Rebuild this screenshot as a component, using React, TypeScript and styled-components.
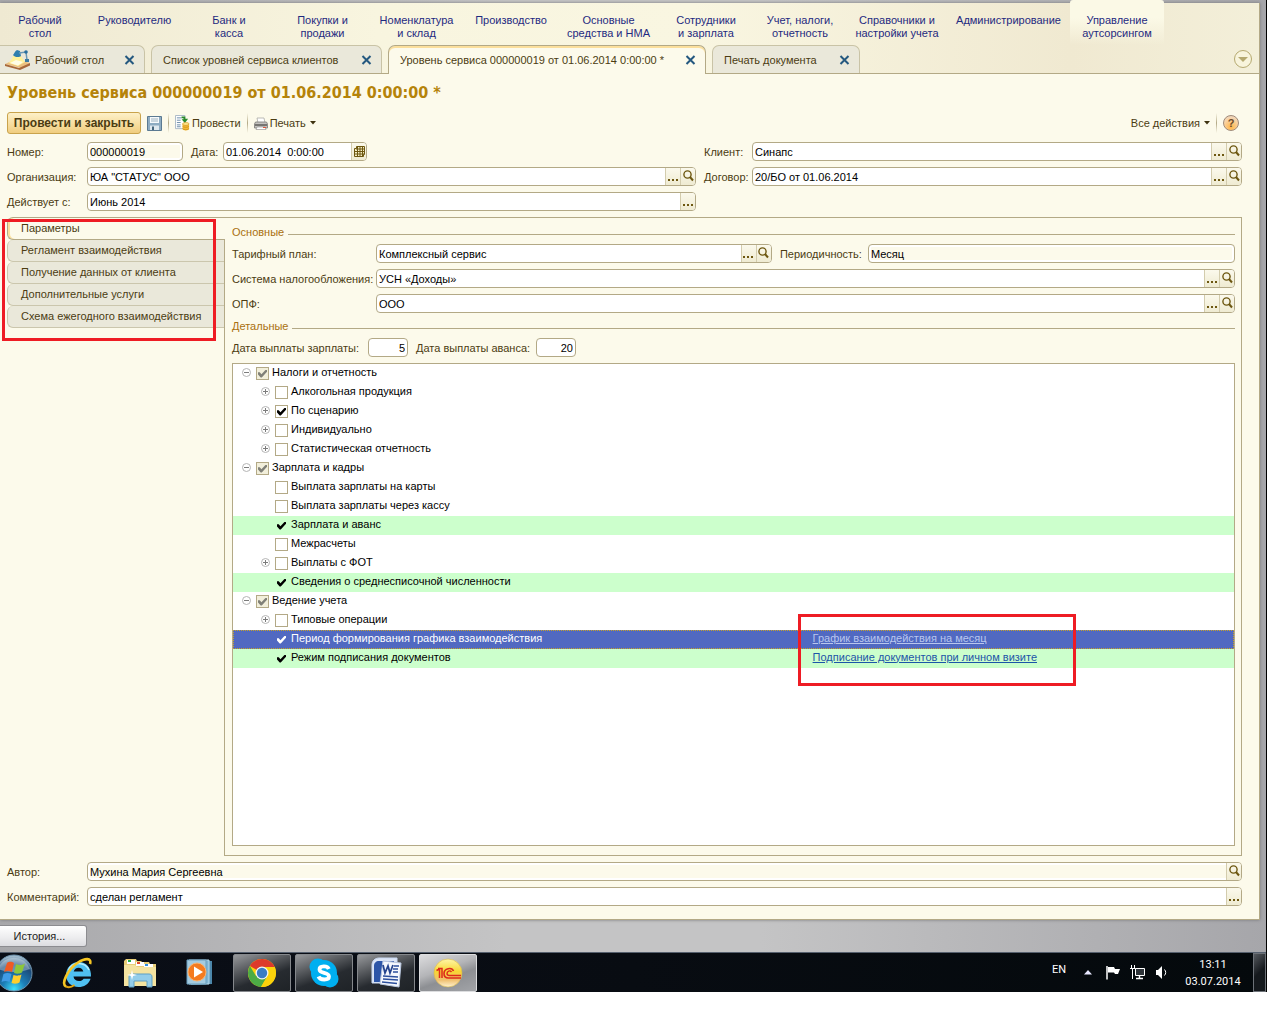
import React from "react";
import styled, { createGlobalStyle, css } from "styled-components";

const line = "#b3a986";
const cream = "#fcfaeb";
const ink = "#4b3c12";

const Global = createGlobalStyle`
  * { box-sizing: border-box; }
  body {
    margin: 0;
    background: #fff;
    font-family: "Liberation Sans", Arial, sans-serif;
    font-size: 11px;
    line-height: 14px;
    color: ${ink};
  }
  button, input { font: inherit; color: inherit; margin: 0; padding: 0; }
`;

const Desktop = styled.div`
  margin-right: 13px;
  border-right: 1px solid #000;
  background: linear-gradient(90deg, #a8a8ab, #c4c4c5 40%, #c4c4c5 60%, #a6a6aa);
  overflow: hidden;
`;

const AppWindow = styled.main`
  margin: 3px 6px 0 0;
  border-right: 1px solid ${line};
  border-bottom: 1px solid ${line};
  background: ${cream};
  box-shadow: 0 0 3px #77777a;
`;

const Header = styled.header`
  background: linear-gradient(90deg, #efe9d2, #f8f5df 30%, #f9f6e1 55%, #f0e9d1 85%, #f3efd9);
`;

const Sections = styled.nav`
  display: flex;
  height: 42px;
  margin-left: -7px;
`;

const Section = styled.a<{ $w: number; $active?: boolean }>`
  width: ${(p) => p.$w}px;
  padding-top: 11px;
  line-height: 13px;
  text-align: center;
  white-space: pre-line;
  text-decoration: none;
  color: #1f2a80;
  ${(p) =>
    p.$active &&
    css`
      margin-top: -3px;
      padding-top: 14px;
      border-radius: 3px 3px 0 0;
      background: linear-gradient(#fbf9e6 40%, rgba(251, 249, 230, 0));
    `}
`;

const TabBar = styled.div`
  display: flex;
  gap: 6px;
  height: 29px;
  border-bottom: 1px solid ${line};
`;

const Tab = styled.div<{ $w: number; $active?: boolean; $first?: boolean }>`
  display: flex;
  align-items: center;
  width: ${(p) => p.$w}px;
  height: 28px;
  padding: 0 9px 0 ${(p) => (p.$first ? 5 : 11)}px;
  border: 1px solid #c9c3a6;
  border-bottom: 0;
  border-left-width: ${(p) => (p.$first ? 0 : 1)}px;
  border-radius: ${(p) => (p.$first ? 0 : 7)}px 7px 0 0;
  background: #eae8da;
  ${(p) =>
    p.$active &&
    css`
      height: 29px;
      border-color: ${line};
      background: ${cream};
      box-shadow: inset 0 2px #fbdf9c;
    `}
`;

const TabTitle = styled.button`
  display: flex;
  flex: 1;
  align-items: center;
  gap: 5px;
  border: 0;
  background: none;
  white-space: nowrap;
`;

const PlainButton = styled.button`
  display: flex;
  align-items: center;
  gap: 2px;
  border: 0;
  background: none;
  white-space: nowrap;
`;

const TabsMenu = styled.button`
  display: grid;
  place-items: center;
  width: 18px;
  height: 18px;
  margin: 5px 7px 0 auto;
  border: 1px solid #b5a970;
  border-radius: 50%;
  background: #f8f4dc;
`;

const Page = styled.div`
  padding: 0 17px 13px 7px;
`;

const Title = styled.h1`
  margin: 0;
  font-family: "DejaVu Sans Condensed", "Noto Sans", sans-serif;
  font-size: 16px;
  font-weight: 700;
  line-height: 38px;
  color: #b58309;
`;

const Toolbar = styled.div`
  display: flex;
  align-items: center;
  gap: 6px;
  height: 22px;
  margin-bottom: 8px;
  padding-right: 3px;
`;

const MainButton = styled.button`
  width: 134px;
  height: 22px;
  border: 1px solid #c9a34c;
  border-radius: 3px;
  background: linear-gradient(#fdf0c8, #f6dc9c 60%, #f0cd80);
  font-size: 12px;
  font-weight: 700;
  white-space: nowrap;
`;

const Divider = styled.span`
  width: 1px;
  height: 20px;
  background: linear-gradient(transparent, ${line}, transparent);
`;

const Spacer = styled.span`
  flex: 1;
`;

const HelpButton = styled.button`
  width: 16px;
  height: 16px;
  border: 1px solid #a08a78;
  border-radius: 50%;
  background: radial-gradient(circle at 50% 80%, #ffb648, #f9d3a4 60%, #e8d8cc);
  font-weight: 700;
  line-height: 13px;
  color: #6b4a2a;
`;

const Columns = styled.div`
  display: flex;
  gap: 8px;
`;

const Stack = styled.div<{ $grow?: number }>`
  display: flex;
  flex: ${(p) => p.$grow ?? 1} 1 0;
  flex-direction: column;
  gap: 6px;
  min-width: 0;
`;

const Row = styled.div`
  display: flex;
  align-items: center;
  height: 19px;
`;

const Label = styled.label<{ $w: number; $gap?: boolean }>`
  flex: none;
  width: ${(p) => p.$w}px;
  margin-left: ${(p) => (p.$gap ? 8 : 0)}px;
  white-space: nowrap;
`;

const FieldBox = styled.span<{ $w?: number; $grow?: number; $readOnly?: boolean }>`
  display: flex;
  flex: ${(p) => (p.$w ? `0 0 ${p.$w}px` : `${p.$grow ?? 1} 1 0`)};
  min-width: 0;
  height: 19px;
  border: 1px solid ${line};
  border-radius: 4px;
  background: ${(p) => (p.$readOnly ? cream : "#fff")};
  box-shadow: inset 0 0 0 2px #fff;
  overflow: hidden;
`;

const Input = styled.input<{ $right?: boolean }>`
  flex: 1;
  min-width: 0;
  padding: 0 2px;
  border: 0;
  outline: 0;
  background: none;
  color: #000;
  text-align: ${(p) => (p.$right ? "right" : "left")};
`;

const FieldButton = styled.button`
  display: grid;
  flex: none;
  justify-items: center;
  align-items: start;
  width: 15px;
  padding-top: 2px;
  border: 0;
  border-left: 1px solid #d3ccad;
  background: linear-gradient(#fbf9ec, #efebd2);
`;

const Body = styled.div`
  display: flex;
  margin: 6px 0;
`;

const SideTabs = styled.div`
  position: relative;
  z-index: 1;
  flex: none;
  width: 218px;
  margin-right: -1px;
`;

const SideTab = styled.button<{ $active?: boolean }>`
  display: block;
  width: 217px;
  height: 22px;
  padding: 0 0 2px 13px;
  border: 1px solid #cbc6ad;
  border-width: 0 0 1px 1px;
  border-radius: 6px 0 0 6px;
  background: #eae8da;
  text-align: left;
  white-space: nowrap;
  ${(p) =>
    p.$active &&
    css`
      width: 218px;
      height: 23px;
      border-color: ${line};
      border-top-width: 1px;
      background: ${cream};
      box-shadow: inset 2px 0 #fbdf9c;
    `}
`;

const Mark = styled.span<{ $x: number; $y: number; $w: number; $h: number }>`
  position: absolute;
  left: ${(p) => p.$x}px;
  top: ${(p) => p.$y}px;
  width: ${(p) => p.$w}px;
  height: ${(p) => p.$h}px;
  border: 3px solid #ee1c24;
  pointer-events: none;
`;

const Panel = styled.section`
  display: flex;
  flex: 1;
  flex-direction: column;
  gap: 6px;
  min-width: 0;
  padding: 7px 6px 9px 7px;
  border: 1px solid ${line};
`;

const GroupTitle = styled.h2`
  display: flex;
  gap: 4px;
  align-items: center;
  margin: 0 0 -1px;
  font-size: 11px;
  font-weight: 400;
  line-height: 14px;
  color: #a9700f;
  &::after {
    content: "";
    flex: 1;
    height: 1px;
    margin-top: 4px;
    background: ${line};
  }
`;

const Tree = styled.ul`
  min-height: 483px;
  margin: 0;
  padding: 0;
  border: 1px solid ${line};
  background: #fff;
  list-style: none;
  color: #000;
`;

const TreeRow = styled.li<{ $tone?: Tone }>`
  display: grid;
  grid-template-columns: 58fr 42fr;
  align-items: center;
  height: 19px;
  background: ${(p) => (p.$tone === "green" ? "#ccffcc" : p.$tone === "blue" ? "#5169c1" : "none")};
  color: ${(p) => (p.$tone === "blue" ? "#fff" : "#000")};
  outline: ${(p) => (p.$tone === "blue" ? "1px dotted #c9a227" : "none")};
  outline-offset: -1px;
`;

const Node = styled.div<{ $level: number }>`
  display: flex;
  align-items: center;
  padding-left: ${(p) => 9 + p.$level * 19}px;
`;

const Toggle = styled.button`
  display: grid;
  width: 9px;
  height: 9px;
  margin: 0 5px 3px 0;
  border: 0;
  background: none;
`;

const ToggleSpace = styled.span`
  width: 14px;
`;

const Check = styled.input<{ $bare?: boolean; $grey?: boolean; $light?: boolean }>`
  display: grid;
  place-items: center;
  appearance: none;
  width: 13px;
  height: 13px;
  border: 1px solid ${(p) => (p.$bare ? "transparent" : line)};
  background: ${(p) => (p.$bare ? "none" : p.$grey ? "#f2efdb" : "#fff")};
  &:checked::before {
    content: "";
    width: 9px;
    height: 8px;
    background: ${(p) => (p.$light ? "#fff" : p.$grey ? "#808078" : "#000")};
    clip-path: polygon(0 35%, 20% 35%, 38% 58%, 88% 0, 100% 10%, 100% 28%, 42% 100%, 30% 100%, 0 62%);
  }
`;

const NodeLabel = styled.label`
  padding: 0 0 4px 3px;
  white-space: nowrap;
`;

const Value = styled.div`
  position: relative;
  margin-left: -1px;
  padding-bottom: 4px;
`;

const ValueLink = styled.a<{ $light?: boolean }>`
  color: ${(p) => (p.$light ? "#b9c6ee" : "#1c55a8")};
  white-space: nowrap;
`;

const History = styled.button`
  display: block;
  width: 87px;
  height: 22px;
  margin: 5px 0;
  padding-right: 7px;
  border: 1px solid #8c8c90;
  border-left: 0;
  border-radius: 0 3px 3px 0;
  background: linear-gradient(#fff, #ececee 60%, #dcdce0);
  color: #222;
`;

const Taskbar = styled.footer`
  display: flex;
  align-items: center;
  height: 40px;
  border-top: 1px solid #56606e;
  background: linear-gradient(90deg, #0a0e17, #080c12 50%, #04090c);
  color: #fff;
`;

const Pinned = styled.div`
  display: flex;
  gap: 29px;
  margin: 0 19px 0 -5px;
`;

const Launch = styled.button`
  display: grid;
  place-items: center;
  height: 39px;
  border: 0;
  background: none;
`;

const Running = styled.div`
  display: flex;
  gap: 4px;
`;

const Task = styled.button<{ $active?: boolean }>`
  display: grid;
  place-items: center;
  width: 58px;
  height: 38px;
  border: 1px solid ${(p) => (p.$active ? "#dcdddf" : "#85888c")};
  border-radius: 2px;
  background: ${(p) =>
    p.$active
      ? "linear-gradient(160deg, #dcdcde, #b4b5b8 40%, #8d8f93 60%, #a2a4a8)"
      : "linear-gradient(160deg, #97999c, #55585c 35%, #272b30 60%, #1f2327)"};
`;

const Tray = styled.div`
  display: flex;
  align-items: center;
  margin-left: auto;
  font-family: Roboto, "Noto Sans", sans-serif;
`;

const TrayButton = styled.button<{ $w: number }>`
  display: grid;
  place-items: center;
  width: ${(p) => p.$w}px;
  height: 24px;
  border: 0;
  background: none;
`;

const Language = styled(TrayButton)`
  padding-bottom: 5px;
`;

const Clock = styled.time`
  width: 80px;
  font-size: 11px;
  line-height: 17px;
  text-align: center;
`;

const ShowDesktop = styled.button`
  width: 13px;
  height: 39px;
  border: 1px solid #6d7278;
  background: linear-gradient(135deg, #55595e, #15191d 50%);
`;

/* ---------- icons ---------- */

const CloseIcon = () => (
  <svg width="11" height="10" viewBox="0 0 11 10">
    <path d="M1.5 1l8 8M9.5 1l-8 8" stroke="#24587f" strokeWidth="2" />
  </svg>
);

const Caret = () => (
  <svg width="8" height="4" viewBox="0 0 8 4">
    <path d="M2 0h6L5 3.500z" fill="#3e3210" />
  </svg>
);

const LampIcon = () => (
  <svg width="25" height="22" viewBox="0 0 25 22">
    <path d="M0 15l11-5 14 4-9 5z" fill="#ecc07f" />
    <path d="M0 15l14 4 11-5v2.500L15 21 0 17z" fill="#a8683a" />
    <path d="M9 6L4 14l9 3 7-4-4-6z" fill="#fff29b" />
    <path d="M5 14l6-3 7 2-5 3.500z" fill="#fffde6" />
    <path d="M8 6c1-1 2-4 4-5l3 1 1 5c-2 2-7 1-8-1z" fill="#2f7fae" />
    <path d="M14 4l7-1 1 8" fill="none" stroke="#6b97b3" strokeWidth="1.500" />
    <circle cx="21" cy="3" r="1.800" fill="#286f9e" />
    <path d="M20 10h4v3h-4z" fill="#3a7aa2" />
  </svg>
);

const SaveIcon = () => (
  <svg width="15" height="15" viewBox="0 0 15 15">
    <path d="M.5.500h14v14H.5z" fill="#8eacc2" stroke="#5b7a92" />
    <path d="M3 1h9v6H3z" fill="#f7fafc" />
    <path d="M4 3h7M4 5h7" stroke="#9db2c0" />
    <path d="M3 9.500h9V14H3z" fill="#dfe8ee" />
    <path d="M5 10.500h2V14H5z" fill="#45657c" />
  </svg>
);

const PostIcon = () => (
  <svg width="15" height="16" viewBox="0 0 16 17">
    <path d="M.5.500h10v14h-10z" fill="#fff" stroke="#a9b7c4" />
    <path d="M2 3h5M2 5.500h4M2 8h4M2 10.500h4M2 12.500h4" stroke="#6689a8" />
    <path d="M7 1.500h4v2.500h3L10.500 8.500 7 4.500h2V3.500H7z" fill="#2b8a2b" />
    <path d="M8 9.500V15c0 2 7 2 7 0V9.500z" fill="#f3b93a" />
    <ellipse cx="11.500" cy="9.500" rx="3.500" ry="1.500" fill="#ffe58c" stroke="#c98a12" strokeWidth=".6" />
    <path d="M8 12c1 1.500 6 1.500 7 0M8 14.500c1 1.500 6 1.500 7 0" fill="none" stroke="#c98a12" strokeWidth=".7" />
  </svg>
);

const PrintIcon = () => (
  <svg width="14" height="13" viewBox="0 0 14 13">
    <path d="M3 1h7l1 5H4z" fill="#fff" stroke="#aaa9a6" strokeWidth=".8" />
    <path d="M1.500 5h11l1 2v4H.5V7z" fill="#c4c2bf" stroke="#7a7876" strokeWidth=".8" />
    <path d="M1 8h12" stroke="#5d5b59" strokeWidth="1.500" />
    <path d="M3 10h8l1 2.500H2z" fill="#fff" stroke="#8c8a88" strokeWidth=".6" />
    <path d="M9 10.500h3" stroke="#e0553a" />
  </svg>
);

const SearchIcon = () => (
  <svg width="11" height="12" viewBox="0 0 11 12">
    <circle cx="4.500" cy="4.500" r="3.600" fill="none" stroke="#6d5710" strokeWidth="1.400" />
    <path d="M7 7l3 3.500" stroke="#6d5710" strokeWidth="2" />
  </svg>
);

const DotsIcon = () => (
  <svg width="11" height="12" viewBox="0 0 11 12">
    <path d="M0 9h2v2H0zM4 9h2v2H4zM8 9h2v2H8z" fill="#6d5710" />
  </svg>
);

const CalendarIcon = () => (
  <svg width="11" height="12" viewBox="0 0 11 12">
    <path d="M2.500 1.500h8v8h-1v2h-9v-8h2z" fill="#f6efc6" stroke="#6d5710" />
    <path d="M2 4h8M1 6.500h9M1 9h9M3.500 2v9M6 2v9M8.500 2v9" stroke="#6d5710" />
  </svg>
);

const ToggleIcon = ({ open }: { open: boolean }) => (
  <svg width="9" height="9" viewBox="0 0 9 9">
    <circle cx="4.500" cy="4.500" r="4" fill="#fff" stroke="#b4b4b4" />
    <path d={open ? "M2 4.500h5" : "M2 4.500h5M4.500 2v5"} stroke="#7c7c7c" />
  </svg>
);

const StartIcon = () => (
  <svg width="38" height="38" viewBox="0 0 38 38">
    <defs>
      <radialGradient id="orb" cx=".5" cy=".95" r=".9">
        <stop offset="0" stopColor="#3fe3ff" />
        <stop offset=".35" stopColor="#1c7fb8" />
        <stop offset=".75" stopColor="#1c4a78" />
        <stop offset="1" stopColor="#9fb9cc" />
      </radialGradient>
    </defs>
    <circle cx="19" cy="19" r="18" fill="url(#orb)" stroke="#6f93ad" />
    <path d="M3 15a17 17 0 0 1 32 0c-10 4-22 4-32 0z" fill="#dbe8f1" opacity=".4" />
    <path d="M12 9c3-2 5-1 7 0l-2 9c-3-1.500-5-1.500-8 0z" fill="#ef5a24" />
    <path d="M21 10c3 1.500 5 1.500 9-.5l-3 9c-3 1.500-5 1.500-8 .5z" fill="#8cc63c" />
    <path d="M8.500 20c3-1.500 5-1.500 8 0l-2 8c-3-1.500-5-1.500-8 0z" fill="#3f9be6" />
    <path d="M18.500 21c3 1 5 1 8-.5l-2 8c-3 1.500-5 1.500-8 .5z" fill="#ffce2e" />
  </svg>
);

const ExplorerIcon = () => (
  <svg width="32" height="32" viewBox="0 0 32 32">
    <path
      d="M29 19.500H11.500c.3 2.800 2.500 4.500 5.500 4.500 2 0 3.600-.8 4.600-2.300h7C26.500 27.600 22 30 16.500 30 9.300 30 4 25 4 18S9.500 5 16.500 5C24.500 5 29.500 11 29 19.500zM11.700 14.500h9.600c-.5-2.400-2.300-3.800-4.700-3.800s-4.300 1.400-4.900 3.800z"
      fill="#4fc0f2"
    />
    <path d="M6.500 13c2-4.500 6-6.500 10-6.500s8.500 2 10.500 6.500" fill="none" stroke="#b9ecff" strokeWidth="1.500" />
    <path d="M4 29.500C-1 27 5 13 16 5.500c7-4.500 14-5 12 1.500" fill="none" stroke="#f6c623" strokeWidth="2.600" />
    <path d="M4 29.500c3 1.500 6.500 0 8.500-1.500" fill="none" stroke="#e0a514" strokeWidth="2" />
  </svg>
);

const FolderIcon = () => (
  <svg width="34" height="32" viewBox="0 0 34 32">
    <path d="M1 4l2-2h10l1 2h4l1 1h7l1 2h6v20H1z" fill="#e8ce78" />
    <path d="M4 3h8v4H4zM13 5h8v4h-8zM21 7h9v4h-9z" fill="#fff" />
    <path d="M5 3h3v2H5z" fill="#27b04b" />
    <path d="M14 5h3v2h-3z" fill="#e04a2a" />
    <path d="M22 7h3v2h-3z" fill="#2f8fe0" />
    <path d="M1 8h11l2 2h19v19H1z" fill="#f4e3a0" />
    <path d="M6 30V20c0-2 1-3 3-3h17c2 0 3 1 3 3v10h-5v-6H11v6z" fill="#93cdea" stroke="#5f9fc4" />
    <path d="M9 13l1 4 4 1-4 1-1 4-1-4-4-1 4-1z" fill="#fff" />
  </svg>
);

const PlayerIcon = () => (
  <svg width="28" height="27" viewBox="0 0 28 27">
    <path d="M5 1l21 1v23L5 26z" fill="#4c87ab" />
    <path d="M3 1h20v24H3z" fill="#80b4d2" stroke="#b8dcee" />
    <path d="M1 1h19v24H1z" fill="#a4cbe0" stroke="#6a9fbf" />
    <circle cx="11" cy="13" r="9" fill="#f47b20" stroke="#fbb26d" />
    <path d="M8 7.500l9 5.500-9 5.500z" fill="#fff" />
  </svg>
);

const ChromeIcon = () => (
  <svg width="30" height="30" viewBox="0 0 30 30">
    <circle cx="15" cy="15" r="14" fill="#fbd20b" />
    <path d="M15 15L2.900 8A14 14 0 0 1 27.600 9H15z" fill="#dd3a2b" />
    <path d="M2.900 8A14 14 0 0 0 14 29l6.500-11L9 18z" fill="#4cab45" />
    <path d="M27.600 9A14 14 0 0 1 14 29l6.500-11L19 9z" fill="#fbd20b" />
    <circle cx="15" cy="15" r="6.500" fill="#f3f3f3" />
    <circle cx="15" cy="15" r="5.200" fill="#3a7cc4" />
  </svg>
);

const SkypeIcon = () => (
  <svg width="30" height="30" viewBox="0 0 30 30">
    <circle cx="9" cy="9" r="8.500" fill="#00aff0" />
    <circle cx="21" cy="21" r="8.500" fill="#00aff0" />
    <circle cx="15" cy="15" r="13" fill="#00aff0" />
    <path
      d="M19.800 11C18.500 7.500 10.500 7.500 10.500 11.500c0 4.500 9.500 2.200 9.500 7 0 4-9 4-10.500 0"
      fill="none"
      stroke="#fff"
      strokeWidth="3.800"
    />
  </svg>
);

const WordIcon = () => (
  <svg width="31" height="31" viewBox="0 0 31 31">
    <path d="M1 26V8c0-4 3-7 7-7h18v5L14 26z" fill="#dbe5f6" stroke="#c9d8f2" />
    <path d="M3 25V9c0-3 2-5 5-5h15v3H12l-2 18z" fill="#2c55a8" />
    <path d="M12 4l18 2-2 24-19-3z" fill="#f5f8fd" stroke="#b9c7df" />
    <path d="M12 8l2 8 3-7 2 7 3-8" fill="none" stroke="#26458f" strokeWidth="1.800" />
    <path d="M23 9h5M22 12h5M22 15h5M12 19l15 1M12 22l15 1M11 25l15 1.500" stroke="#2c4f9c" strokeWidth="1.600" />
  </svg>
);

const OneCIcon = () => (
  <svg width="30" height="30" viewBox="0 0 30 30">
    <defs>
      <linearGradient id="gold" x1="0" y1="0" x2="0" y2="1">
        <stop offset="0" stopColor="#fff6a8" />
        <stop offset=".45" stopColor="#f7d733" />
        <stop offset=".75" stopColor="#f0c070" />
        <stop offset="1" stopColor="#fff3d0" />
      </linearGradient>
    </defs>
    <circle cx="15" cy="15" r="14" fill="url(#gold)" stroke="#d8b84a" strokeWidth=".6" />
    <path d="M3.500 12.500l3-1.500V20M5 10.500h4V20" fill="none" stroke="#dd2a1b" strokeWidth="1.500" />
    <path d="M20.500 13c-1.500-4-9.500-3-9.500 2.500 0 3 2 4.500 4.500 4.500H28" fill="none" stroke="#dd2a1b" strokeWidth="1.600" />
    <path d="M18.500 14c-1.500-2-4.500-1-4.500 1.500 0 1.500 1 2 2.500 2H28" fill="none" stroke="#dd2a1b" strokeWidth="1.400" />
  </svg>
);

const UpIcon = () => (
  <svg width="8" height="5" viewBox="0 0 8 5">
    <path d="M0 4.500L4 0l4 4.500z" fill="#e8e8ff" />
  </svg>
);

const FlagIcon = () => (
  <svg width="15" height="15" viewBox="0 0 15 15">
    <path d="M1 1v13.500" stroke="#fff" strokeWidth="1.500" />
    <path d="M2 2h6l1 2h5l-2 5H9L8 7.500H2z" fill="#fff" />
  </svg>
);

const NetworkIcon = () => (
  <svg width="15" height="15" viewBox="0 0 15 15">
    <path d="M5.500 3.500h9v7h-9z" fill="#2d3338" stroke="#fff" />
    <path d="M9.500 10.500V13M6 13.500h7" stroke="#fff" strokeWidth="1.400" />
    <path d="M1.500 0v3M4.500 0v3M0 3.500h5.500M2.500 4v10" fill="none" stroke="#fff" />
  </svg>
);

const SoundIcon = () => (
  <svg width="13" height="15" viewBox="0 0 13 15">
    <path d="M1 5h2l4-4v13l-4-4H1z" fill="#fff" />
    <path d="M9.500 4.500c1.600 2 1.600 4 0 6" fill="none" stroke="#fff" />
  </svg>
);

/* ---------- data ---------- */

const sections: { name: string; w: number; active?: boolean }[] = [
  { name: "Рабочий\nстол", w: 94 },
  { name: "Руководителю", w: 95 },
  { name: "Банк и\nкасса", w: 94 },
  { name: "Покупки и\nпродажи", w: 93 },
  { name: "Номенклатура\nи склад", w: 95 },
  { name: "Производство", w: 94 },
  { name: "Основные\nсредства и НМА", w: 101 },
  { name: "Сотрудники\nи зарплата", w: 94 },
  { name: "Учет, налоги,\nотчетность", w: 94 },
  { name: "Справочники и\nнастройки учета", w: 100 },
  { name: "Администрирование", w: 123 },
  { name: "Управление\nаутсорсингом", w: 94, active: true },
];

const tabs = [
  { name: "Рабочий стол", w: 145 },
  { name: "Список уровней сервиса клиентов", w: 231 },
  { name: "Уровень сервиса 000000019 от 01.06.2014 0:00:00 *", w: 318, active: true },
  { name: "Печать документа", w: 148 },
];

const sideTabs = [
  "Параметры",
  "Регламент взаимодействия",
  "Получение данных от клиента",
  "Дополнительные услуги",
  "Схема ежегодного взаимодействия",
];

type Tone = "green" | "blue";
type Item = {
  name: string;
  level: number;
  toggle?: "open" | "closed";
  checked?: boolean;
  tone?: Tone;
  link?: string;
};

const items: Item[] = [
  { name: "Налоги и отчетность", level: 0, toggle: "open", checked: true },
  { name: "Алкогольная продукция", level: 1, toggle: "closed" },
  { name: "По сценарию", level: 1, toggle: "closed", checked: true },
  { name: "Индивидуально", level: 1, toggle: "closed" },
  { name: "Статистическая отчетность", level: 1, toggle: "closed" },
  { name: "Зарплата и кадры", level: 0, toggle: "open", checked: true },
  { name: "Выплата зарплаты на карты", level: 1 },
  { name: "Выплата зарплаты через кассу", level: 1 },
  { name: "Зарплата и аванс", level: 1, checked: true, tone: "green" },
  { name: "Межрасчеты", level: 1 },
  { name: "Выплаты с ФОТ", level: 1, toggle: "closed" },
  { name: "Сведения о среднесписочной численности", level: 1, checked: true, tone: "green" },
  { name: "Ведение учета", level: 0, toggle: "open", checked: true },
  { name: "Типовые операции", level: 1, toggle: "closed" },
  {
    name: "Период формирования графика взаимодействия",
    level: 1,
    checked: true,
    tone: "blue",
    link: "График взаимодействия на месяц",
  },
  {
    name: "Режим подписания документов",
    level: 1,
    checked: true,
    tone: "green",
    link: "Подписание документов при личном визите",
  },
];

/* ---------- parts ---------- */

type FieldProps = {
  id: string;
  label: string;
  labelWidth: number;
  value: string;
  width?: number;
  grow?: number;
  gap?: boolean;
  right?: boolean;
  readOnly?: boolean;
  choose?: boolean;
  search?: boolean;
  calendar?: boolean;
};

const Field = (p: FieldProps) => (
  <>
    <Label htmlFor={p.id} $w={p.labelWidth} $gap={p.gap}>
      {p.label}
    </Label>
    <FieldBox $w={p.width} $grow={p.grow} $readOnly={p.readOnly}>
      <Input id={p.id} defaultValue={p.value} readOnly={p.readOnly} $right={p.right} />
      {p.choose && (
        <FieldButton aria-label="Выбрать">
          <DotsIcon />
        </FieldButton>
      )}
      {p.search && (
        <FieldButton aria-label="Открыть">
          <SearchIcon />
        </FieldButton>
      )}
      {p.calendar && (
        <FieldButton aria-label="Календарь">
          <CalendarIcon />
        </FieldButton>
      )}
    </FieldBox>
  </>
);

const TreeItem = ({ item, id }: { item: Item; id: string }) => (
  <TreeRow $tone={item.tone}>
    <Node $level={item.level}>
      {item.toggle ? (
        <Toggle aria-label={item.toggle === "open" ? "Свернуть" : "Развернуть"}>
          <ToggleIcon open={item.toggle === "open"} />
        </Toggle>
      ) : (
        <ToggleSpace />
      )}
      <Check
        id={id}
        type="checkbox"
        defaultChecked={item.checked}
        $bare={!!item.tone}
        $grey={item.level === 0}
        $light={item.tone === "blue"}
      />
      <NodeLabel htmlFor={id}>{item.name}</NodeLabel>
    </Node>
    {item.link && (
      <Value>
        <ValueLink href="#" $light={item.tone === "blue"}>
          {item.link}
        </ValueLink>
        {item.tone === "blue" && <Mark $x={-15} $y={-17} $w={278} $h={72} />}
      </Value>
    )}
  </TreeRow>
);

export default function App() {
  return (
    <>
      <Global />
      <Desktop>
        <AppWindow>
          <Header>
            <Sections>
              {sections.map((s) => (
                <Section key={s.name} href="#" $w={s.w} $active={s.active}>
                  {s.name}
                </Section>
              ))}
            </Sections>
            <TabBar>
              {tabs.map((t, i) => (
                <Tab key={t.name} $w={t.w} $active={t.active} $first={i === 0}>
                  <TabTitle>
                    {i === 0 && <LampIcon />}
                    {t.name}
                  </TabTitle>
                  <PlainButton aria-label="Закрыть">
                    <CloseIcon />
                  </PlainButton>
                </Tab>
              ))}
              <TabsMenu aria-label="Список окон">
                <svg width="10" height="5" viewBox="0 0 10 5">
                  <path d="M0 0h10L5 5z" fill="#b5a970" />
                </svg>
              </TabsMenu>
            </TabBar>
          </Header>

          <Page>
            <Title>Уровень сервиса 000000019 от 01.06.2014 0:00:00 *</Title>
            <Toolbar>
              <MainButton>Провести и закрыть</MainButton>
              <PlainButton aria-label="Записать">
                <SaveIcon />
              </PlainButton>
              <Divider />
              <PlainButton>
                <PostIcon />
                Провести
              </PlainButton>
              <Divider />
              <PlainButton>
                <PrintIcon />
                Печать
                <Caret />
              </PlainButton>
              <Spacer />
              <PlainButton>
                Все действия
                <Caret />
              </PlainButton>
              <Divider />
              <HelpButton>?</HelpButton>
            </Toolbar>

            <Columns>
              <Stack $grow={689}>
                <Row>
                  <Field id="number" label="Номер:" labelWidth={80} value="000000019" width={96} readOnly />
                  <Field id="date" label="Дата:" labelWidth={32} gap value="01.06.2014  0:00:00" width={144} calendar />
                </Row>
                <Row>
                  <Field id="org" label="Организация:" labelWidth={80} value={'ЮА "СТАТУС" ООО'} choose search />
                </Row>
                <Row>
                  <Field id="from" label="Действует с:" labelWidth={80} value="Июнь 2014" choose />
                </Row>
              </Stack>
              <Stack $grow={538}>
                <Row>
                  <Field id="client" label="Клиент:" labelWidth={48} value="Синапс" choose search />
                </Row>
                <Row>
                  <Field id="contract" label="Договор:" labelWidth={48} value="20/БО от 01.06.2014" choose search />
                </Row>
              </Stack>
            </Columns>

            <Body>
              <SideTabs>
                {sideTabs.map((name, i) => (
                  <SideTab key={name} $active={i === 0}>
                    {name}
                  </SideTab>
                ))}
                <Mark $x={-5} $y={2} $w={214} $h={122} />
              </SideTabs>
              <Panel>
                <GroupTitle>Основные</GroupTitle>
                <Row>
                  <Field id="plan" label="Тарифный план:" labelWidth={144} value="Комплексный сервис" grow={396} choose search />
                  <Field id="period" label="Периодичность:" labelWidth={88} gap value="Месяц" grow={367} readOnly />
                </Row>
                <Row>
                  <Field id="tax" label="Система налогообложения:" labelWidth={144} value="УСН «Доходы»" choose search />
                </Row>
                <Row>
                  <Field id="opf" label="ОПФ:" labelWidth={144} value="ООО" choose search />
                </Row>
                <GroupTitle>Детальные</GroupTitle>
                <Row>
                  <Field id="salary" label="Дата выплаты зарплаты:" labelWidth={136} value="5" width={40} right />
                  <Field id="advance" label="Дата выплаты аванса:" labelWidth={120} gap value="20" width={40} right />
                </Row>
                <Tree>
                  {items.map((item, i) => (
                    <TreeItem key={item.name} item={item} id={`item-${i}`} />
                  ))}
                </Tree>
              </Panel>
            </Body>

            <Stack>
              <Row>
                <Field id="author" label="Автор:" labelWidth={80} value="Мухина Мария Сергеевна" readOnly search />
              </Row>
              <Row>
                <Field id="comment" label="Комментарий:" labelWidth={80} value="сделан регламент" choose />
              </Row>
            </Stack>
          </Page>
        </AppWindow>

        <History>История...</History>

        <Taskbar>
          <Pinned>
            <Launch aria-label="Пуск">
              <StartIcon />
            </Launch>
            <Launch aria-label="Internet Explorer">
              <ExplorerIcon />
            </Launch>
            <Launch aria-label="Проводник">
              <FolderIcon />
            </Launch>
            <Launch aria-label="Проигрыватель">
              <PlayerIcon />
            </Launch>
          </Pinned>
          <Running>
            <Task aria-label="Chrome">
              <ChromeIcon />
            </Task>
            <Task aria-label="Skype">
              <SkypeIcon />
            </Task>
            <Task aria-label="Word">
              <WordIcon />
            </Task>
            <Task aria-label="1С:Предприятие" $active>
              <OneCIcon />
            </Task>
          </Running>
          <Tray>
            <Language $w={32}>EN</Language>
            <TrayButton $w={26} aria-label="Показать скрытые значки">
              <UpIcon />
            </TrayButton>
            <TrayButton $w={24} aria-label="Центр поддержки">
              <FlagIcon />
            </TrayButton>
            <TrayButton $w={24} aria-label="Сеть">
              <NetworkIcon />
            </TrayButton>
            <TrayButton $w={24} aria-label="Громкость">
              <SoundIcon />
            </TrayButton>
            <Clock>
              13:11
              <br />
              03.07.2014
            </Clock>
            <ShowDesktop aria-label="Свернуть все окна" />
          </Tray>
        </Taskbar>
      </Desktop>
    </>
  );
}
